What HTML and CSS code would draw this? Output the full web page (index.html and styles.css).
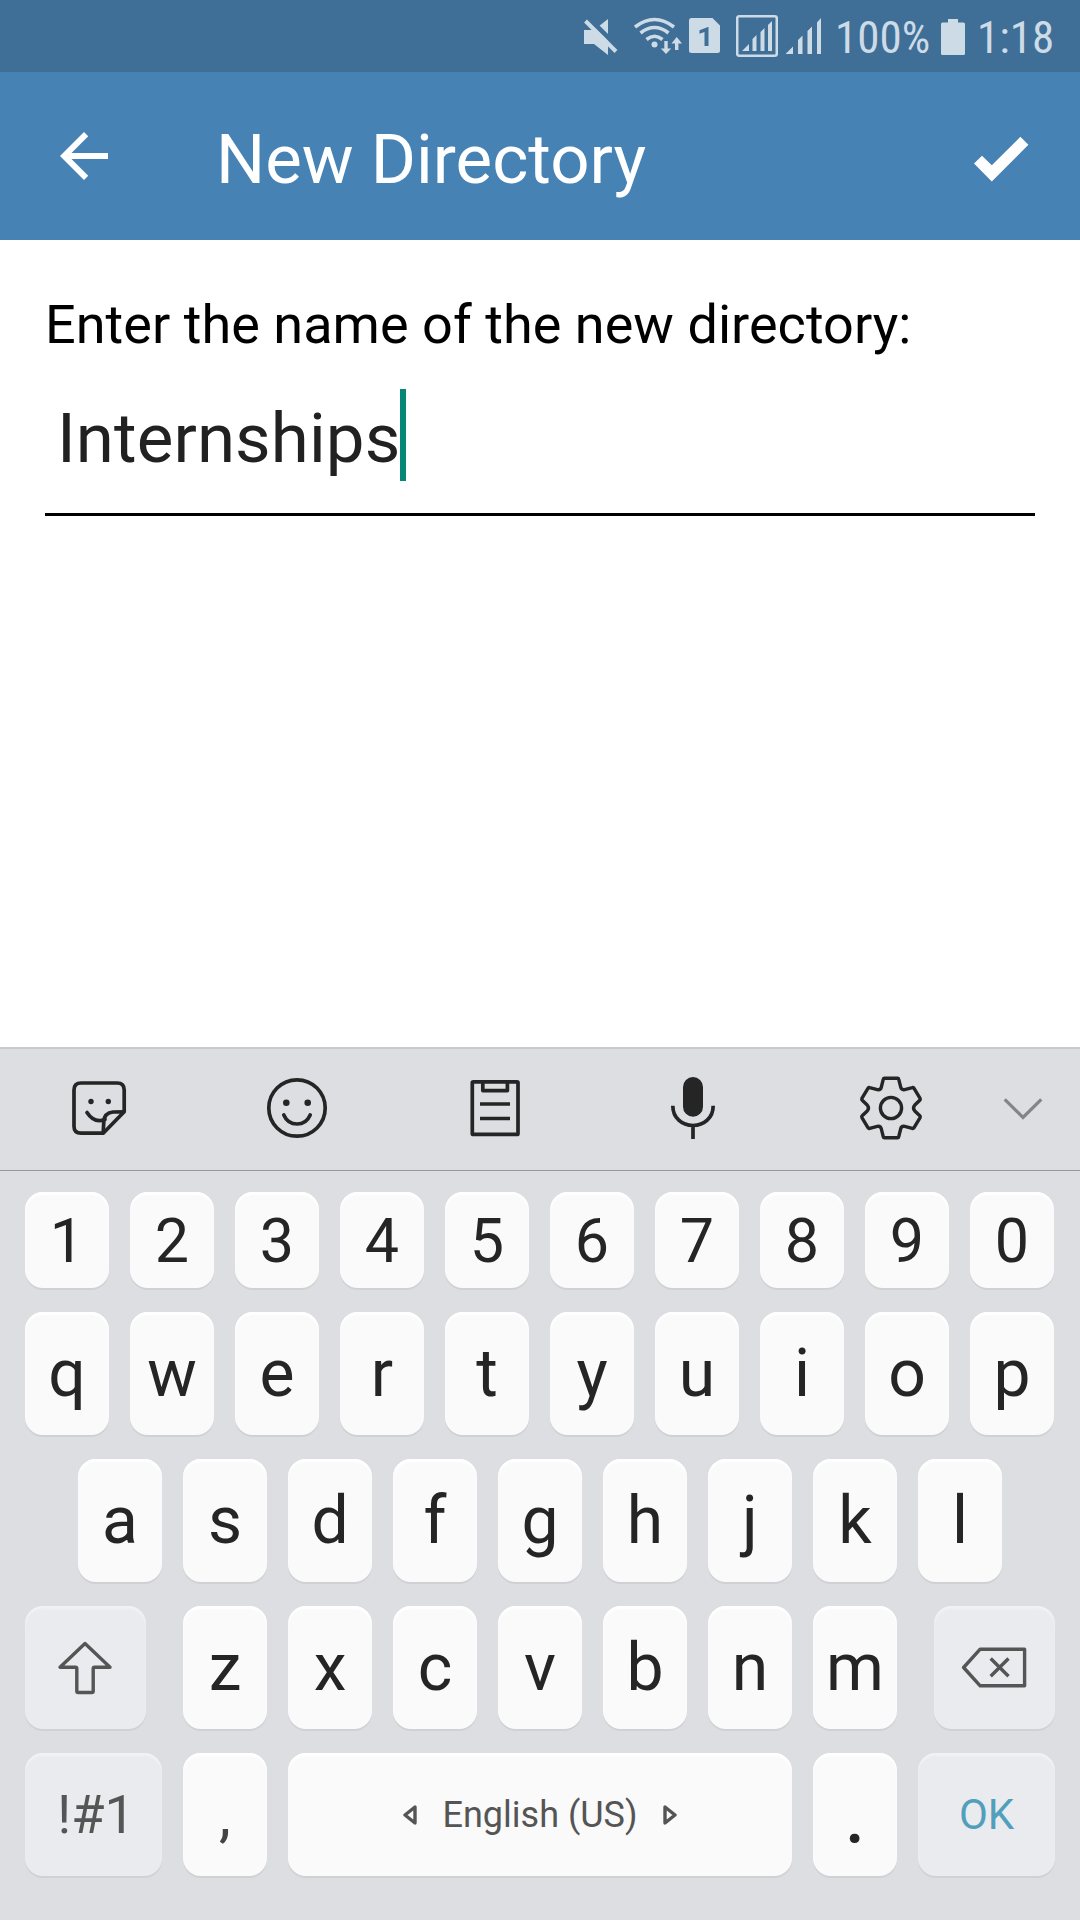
FILE: index.html
```html
<!DOCTYPE html>
<html lang="en">
<head>
<meta charset="utf-8">
<title>New Directory</title>
<link rel="stylesheet" href="styles.css">
</head>
<body>
<div class="screen">
  <div class="status">
    <svg class="mute" viewBox="584 0 34 72" width="34" height="72"><path fill="currentColor" d="M584 30h10l14 -11v36l-14 -11h-10z"/><path class="cutout" d="M588 17.500L619.500 49"/><path class="slash" d="M585.500 21L616 51.500"/></svg>
    <svg class="wifi" viewBox="634 0 48 72" width="48" height="72"><g fill="none" stroke="currentColor" stroke-width="3.600"><path d="M635 27Q654.500 12 674 27"/><path d="M640.500 33Q654.500 22 668.500 33"/><path d="M646.500 39.500Q654.500 33 662.500 39.500"/></g><circle cx="654.500" cy="44.500" r="3" fill="currentColor"/><path fill="currentColor" d="M664.300 41h3.400v7.500h3.500l-5.200 5.500-5.200-5.500h3.500zM675 50h3.400v-6.500h3.600l-5.300-6.500-5.200 6.500h3.500z"/></svg>
    <svg class="sim" viewBox="688 0 32 72" width="32" height="72"><path fill="currentColor" d="M691 18h21.500l7.500 7.500v25q0 2.500-2.500 2.500h-26q-2.500 0-2.500-2.500v-30q0-2.500 2.500-2.500z"/><path fill="#3f6e97" d="M708.500 27v19h-4v-14l-5 1.800v-3.500l8.500-3.300z"/></svg>
    <svg class="boxed-signal" viewBox="736 0 42 72" width="42" height="72"><rect x="737.200" y="16.200" width="39.600" height="39.600" rx="2" fill="none" stroke="currentColor" stroke-width="2.600"/><path fill="currentColor" d="M742 51l7-7v7zM752.500 51v-12l4-4v16zM760.500 51v-19l4-4v23zM768 51v-26l4-4v30z"/></svg>
    <svg class="signal" viewBox="785 0 36 72" width="36" height="72"><path fill="currentColor" d="M785.500 54l7.500-7.500v7.500zM798 54v-14l4.500-4.500v18.500zM807.500 54v-23l4.500-4.500v27.500zM817 54v-31.500l4-4.500v36z"/></svg>
    <span class="percent">100%</span>
    <svg class="battery" viewBox="941 0 24 72" width="24" height="72"><path fill="currentColor" d="M948 19h10v3.500h5.500q1.500 0 1.500 1.500v29.500q0 1.500-1.500 1.500h-21q-1.500 0-1.500-1.500v-29.500q0-1.500 1.500-1.500h5.500z"/></svg>
    <span class="clock">1:18</span>
  </div>

  <header class="appbar">
    <svg viewBox="0 0 24 24" width="72" height="72"><path fill="currentColor" d="M20 11H7.830l5.590-5.590L12 4l-8 8 8 8 1.410-1.410L7.830 13H20v-2z"/></svg>
    <h1 class="title">New Directory</h1>
    <svg class="done" viewBox="973 120 56 72" width="56" height="72"><path fill="currentColor" d="M974 163.500l8-7.800 9.800 9.600 28.600-28.500 8 8-36.600 36.800z"/></svg>
  </header>

  <main class="content">
    <p class="label">Enter the name of the new directory:</p>
    <div class="field"><span class="value">Internships</span><span class="caret"></span></div>
  </main>

  <section class="keyboard">
    <div class="tools">
      <svg viewBox="-40 -40 80 80"><g class="line"><path d="M25.200 3.800V-18q0-7-7-7H-18q-7 0-7 7v36.200q0 7 7 7H4.200z"/><path d="M25.200 3.800L14 4Q5.500 5 4.800 13L4.200 25.200"/><path stroke-linecap="round" d="M-12 4.500Q-5 15.500 6 11.500"/></g><circle cx="-8" cy="-6.500" r="2.700"/><circle cx="9.300" cy="-6.500" r="2.700"/></svg>
      <svg viewBox="-40 -40 80 80"><g class="line"><circle r="28.200"/><path stroke-linecap="round" d="M-13.200 7C-8 19 8 19 13.200 7"/></g><circle cx="-10.700" cy="-5.300" r="3.300"/><circle cx="10.700" cy="-5.300" r="3.300"/></svg>
      <svg viewBox="-40 -40 80 80"><g class="line"><rect x="-22.700" y="-26.200" width="45.700" height="52.600" rx="1"/><path d="M-12.200-26v8.600h24.600V-26M-15-4h30M-15 10.500h30"/></g></svg>
      <svg viewBox="-40 -40 80 80"><rect x="-10" y="-31" width="20" height="39.700" rx="10"/><path class="line" d="M-20.200-2.200C-20.200 10-11 17.500 0 17.500S20.200 10 20.200-2.200M0 17.500V31"/></svg>
      <svg viewBox="-40 -40 80 80"><g class="line gear"><circle r="10.600"/><path d="M-6.500-29.800h13q1 0 1.200 1l2 8q.8 3 4 2.400l7.600-2q1-.3 1.600.6l6.200 10.200q.5 1-.3 1.800l-5 4.800q-2.600 3 0 6l5 4.800q.8.800.3 1.800l-6.200 10.200q-.6.900-1.600.6l-7.600-2q-3.200-.6-4 2.400l-2 8q-.2 1-1.200 1h-13q-1 0-1.200-1l-2-8q-.8-3-4-2.400l-7.600 2q-1 .3-1.600-.6l-6.200-10.200q-.5-1 .3-1.800l5-4.800q2.600-3 0-6l-5-4.800q-.8-.8-.3-1.800l6.200-10.200q.6-.9 1.600-.6l7.600 2q3.200.6 4-2.400l2-8q.2-1 1.200-1z"/></g></svg>
      <svg class="collapse" viewBox="-22 -40 44 80"><path d="M-18.300-8.700L0 9.500 18.300-8.700"/></svg>
    </div>

    <div class="keys">
      <div class="row digits"><span class="key">1</span><span class="key">2</span><span class="key">3</span><span class="key">4</span><span class="key">5</span><span class="key">6</span><span class="key">7</span><span class="key">8</span><span class="key">9</span><span class="key">0</span></div>
      <div class="row"><span class="key">q</span><span class="key">w</span><span class="key">e</span><span class="key">r</span><span class="key">t</span><span class="key">y</span><span class="key">u</span><span class="key">i</span><span class="key">o</span><span class="key">p</span></div>
      <div class="row home"><span class="key">a</span><span class="key">s</span><span class="key">d</span><span class="key">f</span><span class="key">g</span><span class="key">h</span><span class="key">j</span><span class="key">k</span><span class="key">l</span></div>
      <div class="row">
        <span class="key fn shift"><svg viewBox="-32 -32 64 64" width="64" height="64"><path d="M0-24.500L-25-.8H-9.500q1.300 0 1.300 1.300V23.200q0 1.300 1.300 1.300H6.900q1.300 0 1.300-1.300V.500q0-1.300 1.300-1.300H25z"/></svg></span>
        <span class="key">z</span><span class="key">x</span><span class="key">c</span><span class="key">v</span><span class="key">b</span><span class="key">n</span><span class="key">m</span>
        <span class="key fn erase"><svg viewBox="-34 -32 68 64" width="68" height="64"><path d="M-30.400-.5L-13.800-18.800H30.600V17.800H-13.800zM-3.300-9.500l17.800 17.800M14.500-9.500L-3.300 8.300"/></svg></span>
      </div>
      <div class="row">
        <span class="key fn symbols">!#1</span>
        <span class="key comma">,</span>
        <span class="key space"><svg viewBox="0 0 14 24" width="14" height="24"><path d="M12 4v16L2 12z"/></svg><span>English (US)</span><svg viewBox="0 0 14 24" width="14" height="24"><path d="M2 4v16l10-8z"/></svg></span>
        <span class="key period">.</span>
        <span class="key fn ok">OK</span>
      </div>
    </div>
  </section>
</div>
</body>
</html>
```
FILE: styles.css
```css
* { box-sizing: border-box; }
body { margin: 0; background: #fff; font-family: Roboto, sans-serif; }
svg { display: block; flex: none; }

.screen { width: 1080px; height: 1920px; display: flex; flex-direction: column; overflow: hidden; }

/* system status bar */
.status { height: 72px; padding-left: 584px; display: flex; align-items: center; background: #3f6e97; color: #cddbe7; }
.status span { font-family: "Roboto Condensed", Roboto, sans-serif; font-stretch: 75%; font-size: 45px; line-height: 54px; padding-top: 4px; white-space: nowrap; }
.mute .slash { stroke: currentColor; stroke-width: 4; }
.mute .cutout { stroke: #3f6e97; stroke-width: 5; }
.wifi { margin-left: 16px; }
.sim { margin-left: 6px; }
.boxed-signal { margin-left: 16px; }
.signal { margin-left: 7px; }
.percent { margin-left: 14px; width: 94px; }
.battery { margin-left: 12px; }
.clock { margin-left: 12px; }

/* app bar */
.appbar { height: 168px; padding: 0 51px 0 48px; display: flex; align-items: center; background: #4682b4; color: #fff; }
.title { flex: 1; margin: 0; padding: 7px 0 0 96px; font-size: 69px; font-weight: 400; line-height: 80px; }

/* form */
.content { height: 807px; padding: 53px 45px 0; }
.label { margin: 0; font-size: 54px; line-height: 64px; letter-spacing: .04px; color: #000; white-space: nowrap; }
.field { height: 159px; padding: 32px 12px 0; display: flex; align-items: flex-start; border-bottom: 3px solid #000; }
.value { padding-top: 9px; font-size: 69px; line-height: 81px; letter-spacing: .1px; color: #212121; }
.caret { width: 6px; height: 92px; background: #058677; }

/* keyboard */
.keyboard { flex: 1; background: #dddee2; border-top: 2px solid #c9cacb; }
.tools { height: 122px; padding-right: 35px; display: grid; grid-template-columns: repeat(5, 198px) 1fr; align-items: center; justify-items: center; border-bottom: 1px solid #98989b; }
.tools svg { width: 80px; height: 80px; fill: #252525; margin-top: -3px; }
.tools .line { fill: none; stroke: #252525; stroke-width: 3.7; stroke-linejoin: round; }
.tools .gear { stroke-width: 3.4; }
.tools .collapse { width: 44px; fill: none; stroke: #858587; stroke-width: 3.3; margin-left: 11px; }

.keys { padding: 21px 25px 0; display: flex; flex-direction: column; gap: 24px; }
.row { height: 123px; display: flex; gap: 21px; }
.row.digits { height: 96px; }
.home { padding-left: 53px; }
.key { width: 84px; display: flex; align-items: center; justify-content: center; border-radius: 18px; background: #fafafa; color: #252525; font-size: 66px; line-height: 1; box-shadow: 0 2px 0 #d0d1d5, inset 0 3px 2px #fff; }
.digits .key { padding-top: 2px; font-size: 61px; }
.fn { background: #e9ebee; color: #555; box-shadow: 0 2px 0 #d0d1d5, inset 0 3px 2px #f1f2f4; }
.fn svg, .space svg { fill: none; stroke: #555; stroke-width: 3.4; stroke-linejoin: round; }
.fn svg { margin-right: 1px; }
.shift { width: 121px; margin-right: 16px; }
.erase { width: 121px; margin-left: 16px; }
.symbols, .ok { width: 137px; }
.symbols { padding-left: 5px; font-size: 54px; }
.ok { font-size: 42px; color: #509fbd; }
.comma { font-size: 60px; color: #444; }
.period { padding-bottom: 2px; font-size: 86px; }
.space { width: 504px; gap: 26px; font-size: 36px; color: #555; }
```
